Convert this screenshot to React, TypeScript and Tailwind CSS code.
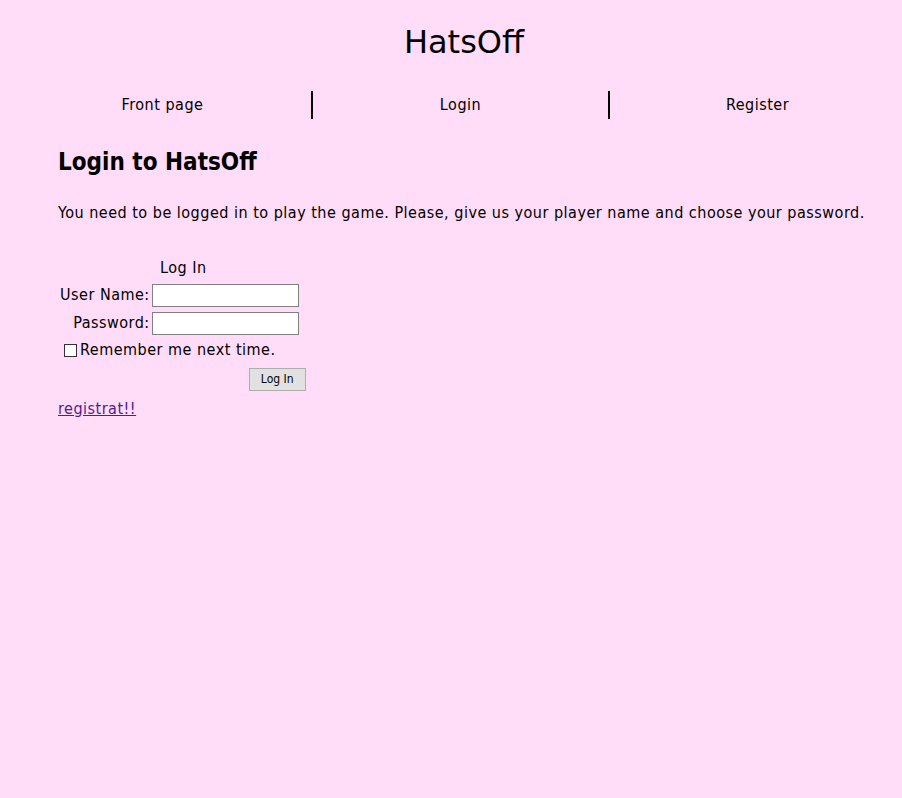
import React from 'react';

const font = { fontFamily: '"DejaVu Sans Condensed", "DejaVu Sans", sans-serif' };

const NavItem: React.FC<{ label: string; border?: boolean }> = ({ label, border }) => (
  <li className={`w-[297px] shrink-0 h-[28px] flex items-center justify-center ${border ? 'border-l-2 border-black' : ''}`}>
    <a href="#" className="text-black no-underline">{label}</a>
  </li>
);

const App: React.FC = () => {
  return (
    <div className="min-h-[798px] overflow-hidden bg-[#ffddf8] text-black text-[16px] tracking-[0.5px]" style={font}>
      <h1
        className="text-[32px] leading-[38px] text-center pt-[23px] pl-[26px] tracking-normal"
        style={{ fontFamily: '"DejaVu Sans", sans-serif' }}
      >
        HatsOff
      </h1>
      <ul className="flex pl-[14px] mt-[30px]">
        <NavItem label="Front page" />
        <NavItem label="Login" border />
        <NavItem label="Register" border />
      </ul>
      <div className="pl-[58px] pr-[10px]">
        <h2 className="text-[24px] leading-[28px] font-bold mt-[29px] tracking-normal">Login to HatsOff</h2>
        <p className="mt-[27px] leading-[20px] whitespace-nowrap">
          You need to be logged in to play the game. Please, give us your player name and choose your password.
        </p>
        <table className="mt-[33px] border-separate border-spacing-[2px] -ml-[1px]">
          <tbody>
            <tr>
              <td colSpan={2} className="text-center leading-[20px] pb-[2px]">Log In</td>
            </tr>
            <tr>
              <td className="text-right pl-[1px] py-[1px]">User Name:</td>
              <td className="w-[156px] py-[1px]">
                <input className="w-[147px] h-[23px] border border-[#808080] bg-white block" />
              </td>
            </tr>
            <tr>
              <td className="text-right py-[1px]">Password:</td>
              <td className="py-[1px]">
                <input type="password" className="w-[147px] h-[23px] border border-[#808080] bg-white block" />
              </td>
            </tr>
            <tr>
              <td colSpan={2} className="pl-[5px]">
                <label className="flex items-center">
                  <span className="w-[13px] h-[13px] border border-[#333] bg-white inline-block mr-[3px]" />
                  Remember me next time.
                </label>
              </td>
            </tr>
            <tr>
              <td colSpan={2} className="text-right pt-[2px]">
                <button
                  className="h-[23px] w-[57px] mr-[2px] bg-[#e1e1e1] border border-[#adadad] text-[12px] leading-[20px] text-black tracking-normal"
                  style={font}
                >
                  Log In
                </button>
              </td>
            </tr>
          </tbody>
        </table>
        <a href="#" className="text-[#551a8b] underline block mt-[6px] leading-[20px] w-fit">registrat!!</a>
      </div>
    </div>
  );
};

export default App;
